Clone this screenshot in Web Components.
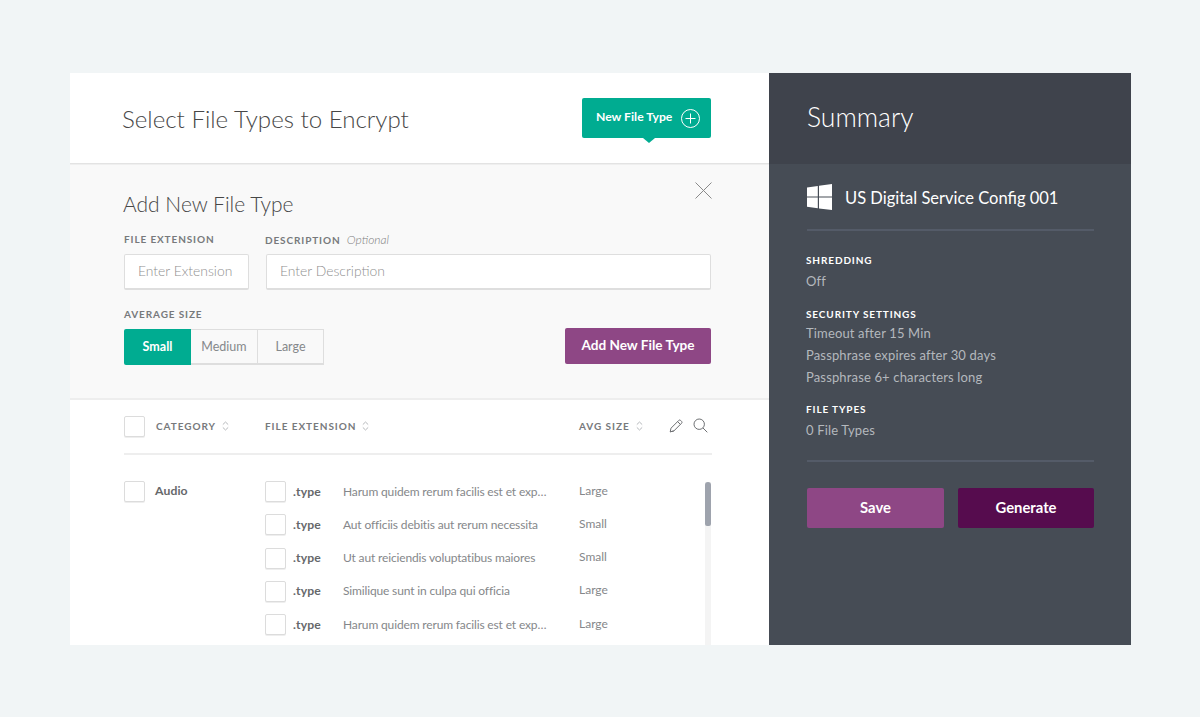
<!DOCTYPE html>
<html lang="en"><head><meta charset="utf-8"><title>Select File Types to Encrypt</title>
<style>
html,body{margin:0;height:100%;background:#f1f5f6;font-family:Lato,"Open Sans",sans-serif;overflow:hidden}
body{padding:73px 69px 72px 70px;box-sizing:border-box;height:717px}
</style></head><body>
<app-shell>
  <main-pane></main-pane>
  <summary-pane></summary-pane>
</app-shell>
<script>
const def=(name,html)=>{customElements.define(name,class extends HTMLElement{connectedCallback(){if(this.shadowRoot)return;const r=this.attachShadow({mode:'open'});r.innerHTML=typeof html==='function'?html(this):html;}})};
const sortIcon=`<svg width="7" height="10" viewBox="0 0 7 10" fill="none" stroke="#b5b8bb" stroke-width="1"><path d="M.8 3.6 3.5 1 6.2 3.6M.8 6.4 3.5 9 6.2 6.4"/></svg>`;

def('app-shell',`<style>:host{display:flex;height:572px;width:1061px;background:#fff}</style><slot></slot>`);

def('x-check',`<style>:host{display:block;width:21px;height:21px;box-sizing:border-box;background:#fff;border:1px solid #dcdcdc;border-radius:2px;box-shadow:0 1px 0 #eee;flex:none}</style>`);

def('x-label',`<style>:host{display:block;font:700 10px/14px Lato,sans-serif;letter-spacing:.88px;text-transform:uppercase;color:var(--label,#77797c)}</style><slot></slot>`);

def('x-field',`<style>:host{display:block;box-sizing:border-box;height:36px;background:#fff;border:1px solid #dedede;border-bottom-width:2px;border-radius:2px;padding:0 13px;font:300 13.9px/31px Lato,sans-serif;color:#8f8f8f;white-space:nowrap}</style><slot></slot>`);

def('x-btn',`<style>:host{display:flex;align-items:center;justify-content:center;box-sizing:border-box;border-radius:2px;color:#fff;font:700 var(--fs,13.6px)/1 Lato,sans-serif;background:var(--bg);padding-bottom:var(--pb,0)}</style><slot></slot>`);

def('new-file-btn',`<style>
:host{display:flex;position:relative;align-items:center;box-sizing:border-box;width:129px;height:40px;padding:0 11px 0 14px;justify-content:space-between;background:#00ac91;border-radius:2px;color:#fff;font:700 12.2px/1 Lato,sans-serif}
.n{position:absolute;left:61px;bottom:-5px;width:0;height:0;border:6px solid transparent;border-bottom:0;border-top:5px solid #00ac91}
span{position:relative;top:-1px}
</style><span>New File Type</span><svg width="19" height="19" viewBox="0 0 19 19" fill="none" stroke="#fff" stroke-width="1"><circle cx="9.5" cy="9.5" r="9"/><path d="M9.5 4.5v10M4.5 9.5h10"/></svg><i class="n"></i>`);

def('pane-header',`<style>
:host{display:flex;box-sizing:border-box;height:91px;align-items:center;justify-content:space-between;padding:0 58px 0 52px;border-bottom:1px solid #e3e3e3;background:#fff}
h1{margin:0;font:300 24.1px/1 Lato,sans-serif;color:#474747;position:relative;top:1px}
</style><h1>Select File Types to Encrypt</h1><new-file-btn></new-file-btn>`);

def('size-toggle',`<style>
:host{display:flex;width:200px;height:36px;font:400 12.5px/1 Lato,sans-serif;color:#85888b;box-sizing:border-box}
div{flex:1;display:flex;align-items:center;justify-content:center;box-sizing:border-box;border:1px solid #dedede;border-left-width:0;border-bottom-width:2px;padding-top:1px}
.on{background:#00ac91;color:#fff;border:0;font-weight:700;border-radius:2px 0 0 2px;flex:0 0 67px;padding-top:0}
.m{flex:0 0 67px}
</style><div class="on">Small</div><div class="m">Medium</div><div>Large</div>`);

def('add-panel',`<style>
:host{display:block;position:relative;box-sizing:border-box;height:236px;background:#f9f9f9;padding:26px 58px 0 54px;border-top:1px solid #efefef;border-bottom:2px solid #eee}
h2{margin:0 0 15px -1px;font:300 21px/26px Lato,sans-serif;color:#474747}
.close{position:absolute;left:625px;top:17px;width:17px;height:17px}
.g{display:grid;grid-template-columns:125px 1fr;column-gap:17px;row-gap:7px}
.g x-label:nth-child(2){margin-left:-1px}
em{font:italic 300 12px Lato,sans-serif;text-transform:none;letter-spacing:0;color:#808080;margin-left:3px}
.b{display:flex;justify-content:space-between;align-items:flex-start;margin-top:17px}
.b x-label{margin-bottom:8px}
x-btn{width:146px;height:36px;margin-top:21px;--bg:#8e4785}
</style>
<svg class="close" viewBox="0 0 17 17" fill="none" stroke="#8a8a8a" stroke-width="1"><path d="M.5 .5 16.5 16.5M16.5 .5 .5 16.5"/></svg>
<h2>Add New File Type</h2>
<div class="g"><x-label>File Extension</x-label><x-label>Description <em>Optional</em></x-label>
<x-field>Enter Extension</x-field><x-field>Enter Description</x-field></div>
<div class="b"><div><x-label>Average Size</x-label><size-toggle></size-toggle></div><x-btn>Add New File Type</x-btn></div>`);

def('type-row',e=>`<style>
:host{display:grid;grid-template-columns:21px 293px 1fr;align-items:center;height:33.25px;font:400 12px/16px Lato,sans-serif;color:#85878a;letter-spacing:-.15px}
.r{display:flex;align-items:center;min-width:0;padding-left:7px}
b{font-weight:700;color:#66686b;font-size:12.2px;width:50px;flex:none;letter-spacing:.1px}
span{white-space:nowrap}
.z{position:relative;top:-1px;letter-spacing:0}
</style><x-check></x-check><div class="r"><b>.type</b><span>${e.getAttribute('d')}</span></div><div class="z">${e.getAttribute('s')}</div>`);

def('file-table',`<style>
:host{display:block;flex:1;min-height:0;overflow:hidden;position:relative;padding:0 57px 0 54px;background:#fff}
.h{display:flex;align-items:center;height:55px;border-bottom:2px solid #eee;box-sizing:border-box;position:relative}
.h x-label{display:flex;align-items:center;gap:6px;color:#77797c;letter-spacing:.95px;margin-bottom:2px}
.c1{display:flex;align-items:center;gap:11px;width:141px}
.c2{width:314px}
.icons{display:flex;gap:10px;align-items:center;margin:0 4px 2px auto}
.body{display:grid;grid-template-columns:141px 1fr;padding-top:20px}
.cat{display:flex;gap:10px;height:33px;align-items:center;font:700 12.2px/1 Lato,sans-serif;color:#66686b;letter-spacing:.1px}
.track{position:absolute;left:635px;top:82px;bottom:0;width:6px;background:#f4f4f4}
.thumb{width:6px;height:44px;border-radius:3px 3px 2px 2px;background:#9ea3ad}
</style>
<div class="h"><div class="c1"><x-check></x-check><x-label>Category ${sortIcon}</x-label></div>
<div class="c2"><x-label>File Extension ${sortIcon}</x-label></div>
<x-label>Avg Size ${sortIcon}</x-label>
<div class="icons">
<svg width="14" height="14" viewBox="0 0 14 14" fill="none" stroke="#6d6f72" stroke-width="1" stroke-linejoin="round"><path d="M1.2 12.8 2 9.2 9.8 1.4a1.3 1.3 0 0 1 1.8 0l1 1a1.3 1.3 0 0 1 0 1.8L4.8 12z M1.2 12.8 4.8 12M8.6 2.6l2.8 2.8"/></svg>
<svg width="15" height="15" viewBox="0 0 15 15" fill="none" stroke="#6d6f72" stroke-width="1"><circle cx="6.2" cy="6.2" r="5.2"/><path d="M10 10l4.3 4.3"/></svg>
</div></div>
<div class="body"><div class="cat"><x-check></x-check>Audio</div>
<div>
<type-row d="Harum quidem rerum facilis est et exp…" s="Large"></type-row>
<type-row d="Aut officiis debitis aut rerum necessita" s="Small"></type-row>
<type-row d="Ut aut reiciendis voluptatibus maiores" s="Small"></type-row>
<type-row d="Similique sunt in culpa qui officia" s="Large"></type-row>
<type-row d="Harum quidem rerum facilis est et exp…" s="Large"></type-row>
</div></div>
<div class="track"><div class="thumb"></div></div>`);

def('main-pane',`<style>:host{display:flex;flex-direction:column;width:699px;flex:none;background:#fff}</style><pane-header></pane-header><add-panel></add-panel><file-table></file-table>`);

def('sum-block',e=>`<style>
:host{display:block;--label:#fff;font:400 13px/22px Lato,sans-serif;color:#b4b8bd;letter-spacing:.15px}
x-label{margin-bottom:var(--gap,3px)}
</style><x-label>${e.getAttribute('t')}</x-label><slot></slot>`);

def('summary-pane',`<style>
:host{display:flex;flex-direction:column;flex:1;background:#464c55;color:#fff}
header{height:91px;box-sizing:border-box;background:#3f434c;padding:27px 37px 0 38px;font:300 26.5px/34px Lato,sans-serif}
.body{padding:20px 37px 0 38px}
.cfg{display:flex;align-items:center;gap:13px;height:26px;font:400 16.5px/1 Lato,sans-serif;padding-bottom:19px;border-bottom:2px solid #545b68;margin-bottom:22px}
.cfg svg{flex:none}
.cfg span{position:relative;top:1px}
sum-block{margin-left:-1px}
.s1{margin-bottom:15px}.s2{margin-bottom:14px;--gap:1px}
hr{border:0;height:2px;background:#545b68;margin:19px 0 26px}
.btns{display:grid;grid-template-columns:137px 136px;justify-content:space-between}
x-btn{height:40px;--fs:14.8px;--pb:2px}
</style>
<header>Summary</header>
<div class="body">
<div class="cfg"><svg width="25" height="26" viewBox="0 0 25 26" fill="#fff"><path d="M0 3.4 10.8 1.9V12.4H0zM12 1.7 25 0V12.4H12zM0 13.6H10.8V24.2L0 22.7zM12 13.6H25V26L12 24.4z"/></svg><span>US Digital Service Config 001</span></div>
<sum-block class="s1" t="Shredding">Off</sum-block>
<sum-block class="s2" t="Security Settings">Timeout after 15 Min<br>Passphrase expires after 30 days<br>Passphrase 6+ characters long</sum-block>
<sum-block t="File Types">0 File Types</sum-block>
<hr>
<div class="btns"><x-btn style="--bg:#8e4785">Save</x-btn><x-btn style="--bg:#560c4e">Generate</x-btn></div>
</div>`);
</script>
</body></html>
